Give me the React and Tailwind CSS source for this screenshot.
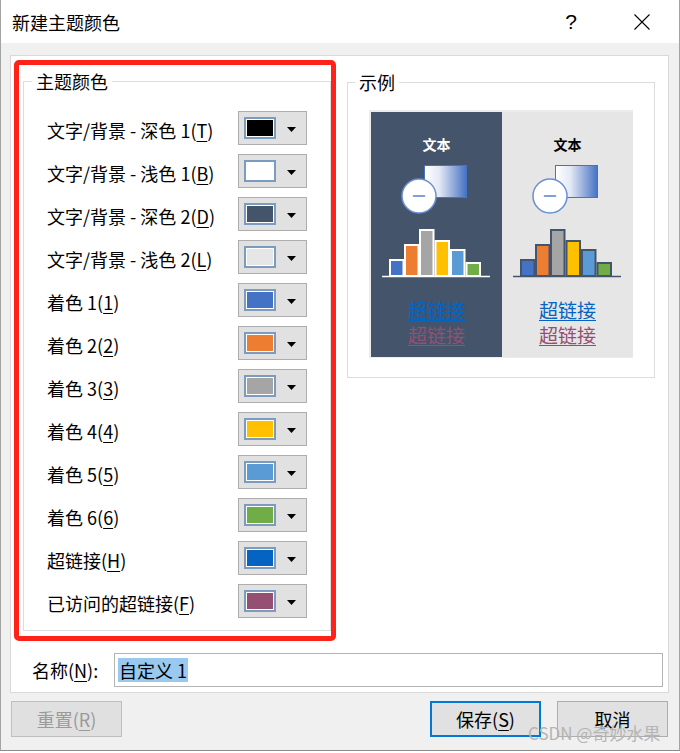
import React from 'react';

const colorRows = [
  { text: '文字/背景 - 深色 1', key: 'T', color: '#000000' },
  { text: '文字/背景 - 浅色 1', key: 'B', color: '#ffffff' },
  { text: '文字/背景 - 深色 2', key: 'D', color: '#44546a' },
  { text: '文字/背景 - 浅色 2', key: 'L', color: '#e7e6e6' },
  { text: '着色 1', key: '1', color: '#4472c4' },
  { text: '着色 2', key: '2', color: '#ed7d31' },
  { text: '着色 3', key: '3', color: '#a5a5a5' },
  { text: '着色 4', key: '4', color: '#ffc000' },
  { text: '着色 5', key: '5', color: '#5b9bd5' },
  { text: '着色 6', key: '6', color: '#70ad47' },
  { text: '超链接', key: 'H', color: '#0563c1' },
  { text: '已访问的超链接', key: 'F', color: '#954f72' },
];

// bar chart in the preview: [x, top] per bar, bottom is 164
const bars = [
  [18, 147, '#4472c4'],
  [33, 132, '#ed7d31'],
  [48, 117, '#a5a5a5'],
  [63.5, 128, '#ffc000'],
  [79, 137, '#5b9bd5'],
  [94.5, 150, '#70ad47'],
];

function ColorButton({ color }) {
  return (
    <div className="flex h-[34px] w-[69px] items-center border border-[#adadad] bg-[#e1e1e1] pl-[5px]">
      <div className="h-[22px] w-[32px] border-2 border-[#7c9cbf] bg-white p-[1px]">
        <div className="h-full w-full" style={{ backgroundColor: color }} />
      </div>
      <svg className="ml-[11px] mt-[3px]" width="9" height="5" viewBox="0 0 9 5">
        <path d="M0 0h9L4.5 5z" fill="#000" />
      </svg>
    </div>
  );
}

function PreviewHalf({ dark }) {
  const line = dark ? '#ffffff' : '#44546a';
  const gid = dark ? 'gradDark' : 'gradLight';
  return (
    <div className={`flex h-full w-[131px] flex-col items-center ${dark ? 'bg-[#44546a]' : 'bg-[#e7e6e6]'}`}>
      <div className={`mt-[22px] text-[14px] font-bold leading-[20px] ${dark ? 'text-white' : 'text-black'}`}>文本</div>
      <svg className="mt-[8px]" width="131" height="118" viewBox="0 50 131 118">
        <defs>
          <linearGradient id={gid} x1="0" x2="1" y1="0" y2="0">
            <stop offset="0" stopColor="#ffffff" />
            <stop offset="0.35" stopColor="#e4e9f5" />
            <stop offset="1" stopColor="#4472c4" />
          </linearGradient>
        </defs>
        <rect x="53.5" y="53.5" width="42" height="32" fill={`url(#${gid})`} stroke="#4472c4" strokeWidth="1" />
        <circle cx="48" cy="84" r="17" fill="#ffffff" stroke="#6c8fd0" strokeWidth="1.5" />
        <path d="M42 85l1 -2l1 2l1 -2l1 2l1 -2l1 2l1 -2l1 2l1 -2l1 2l1 -2l1 2" fill="none" stroke="#4472c4" strokeWidth="0.8" />
        {bars.map(([x, top, c], i) => (
          <rect key={i} x={x + 1} y={top + 1} width="13.5" height={163 - top} fill={c} stroke={line} strokeWidth="2" />
        ))}
        <line x1="11" x2="119" y1="164.5" y2="164.5" stroke={line} strokeWidth="1.5" />
      </svg>
      <div className="mt-[18px] text-[19px] leading-[24px] text-[#0563c1] underline underline-offset-[2px]">超链接</div>
      <div className="mt-[1px] text-[19px] leading-[24px] text-[#954f72] underline underline-offset-[2px]">超链接</div>
    </div>
  );
}

export default function App() {
  return (
    <div className="relative h-[753px] w-[680px] bg-white font-['Noto_Sans_CJK_SC',sans-serif] text-black">
      <div className="flex h-[751px] flex-col border-x border-b border-x-[#a3a3a3] border-b-[#8a8a8a]">
        {/* title bar */}
        <div className="flex h-[43px] items-center bg-white pl-[11px]">
          <span className="text-[18px] leading-[24px]">新建主题颜色</span>
          <span className="ml-auto font-['Liberation_Sans',sans-serif] text-[21px] font-light leading-[24px]">?</span>
          <svg className="ml-[57px] mr-[29px]" width="16" height="16" viewBox="0 0 16 16">
            <path d="M0.5 0.5L15.5 15.5M15.5 0.5L0.5 15.5" stroke="#000" strokeWidth="1.1" />
          </svg>
        </div>

        <div className="flex flex-1 flex-col bg-[#f0f0f0] pt-[12px]">
          <div className="ml-[9px] mr-[10px] border border-[#d9d9d9] bg-white pb-[5px] pl-[3px] pt-[4px]">
            <div className="flex items-start">
              {/* theme colours, marked in red */}
              <div className="w-[322px] rounded-[5px] border-[5px] border-[#ff2218] pb-[5px] pl-[4px] pt-[4px]">
                <fieldset className="border border-[#dcdcdc]">
                  <legend className="ml-[8px] px-[4px] text-[18px] leading-[24px]">主题颜色</legend>
                  <div className="flex flex-col gap-[9px] px-[23px] pb-[12px] pt-[18px]">
                    {colorRows.map((r) => (
                      <div key={r.key} className="flex items-center justify-between">
                        <span className="pt-[3px] text-[18px] leading-[24px]">
                          {r.text}(<u className="underline-offset-[3px]">{r.key}</u>)
                        </span>
                        <ColorButton color={r.color} />
                      </div>
                    ))}
                  </div>
                </fieldset>
              </div>

              {/* sample */}
              <fieldset className="ml-[11px] mt-[10px] w-[308px] border border-[#dcdcdc]">
                <legend className="ml-[7px] px-[4px] text-[18px] leading-[24px]">示例</legend>
                <div className="px-[21px] pb-[19px] pt-[16px]">
                  <div className="flex h-[248px] w-[264px] bg-[#ececec] pb-[1px] pl-[2px] pr-[1px] pt-[2px]">
                    <PreviewHalf dark />
                    <PreviewHalf />
                  </div>
                </div>
              </fieldset>
            </div>

            {/* name */}
            <div className="mt-[12px] flex items-center pl-[18px]">
              <span className="w-[82px] text-[18px] leading-[24px]">
                名称(<u className="underline-offset-[3px]">N</u>):
              </span>
              <div className="mr-[5px] flex h-[34px] flex-1 items-center border border-[#b4b4b4] bg-white pl-[3px]">
                <span className="bg-[#99c9ef] px-[1px] text-[18px] leading-[24px]">自定义 1</span>
              </div>
            </div>
          </div>

          {/* buttons */}
          <div className="mt-[8px] flex pl-[10px] pr-[11px]">
            <button className="flex h-[36px] w-[111px] items-center justify-center border border-[#bfbfbf] bg-[#e0e0e0] text-[18px] leading-[24px] text-[#9a9a9a]">
              重置(<u className="underline-offset-[3px]">R</u>)
            </button>
            <button className="ml-auto flex h-[36px] w-[111px] items-center justify-center border-2 border-[#0078d7] bg-[#e1e1e1] text-[18px] leading-[24px]">
              保存(<u className="underline-offset-[3px]">S</u>)
            </button>
            <button className="ml-[16px] flex h-[36px] w-[111px] items-center justify-center border border-[#adadad] bg-[#e1e1e1] text-[18px] leading-[24px]">
              取消
            </button>
          </div>
        </div>
      </div>

      {/* watermark */}
      <div className="absolute left-[528px] top-[721px] text-[17px] leading-[24px] text-[#b5b5b5]">CSDN @奇妙水果</div>
    </div>
  );
}
